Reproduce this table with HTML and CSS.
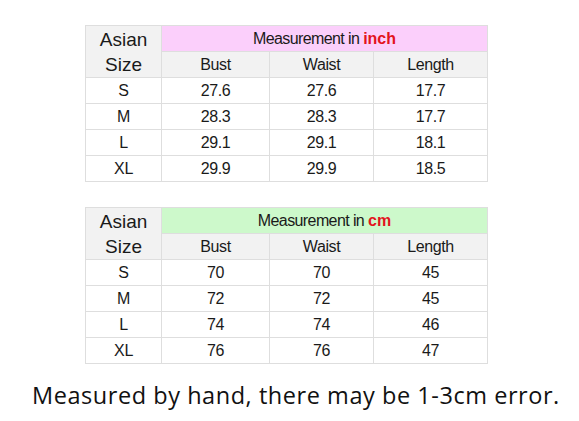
FILE: index.html
```html
<!DOCTYPE html>
<html>
<head>
<meta charset="utf-8">
<link rel="stylesheet" href="styles.css">
</head>
<body>
<div class="page">
  <table class="size-table">
    <colgroup>
      <col class="c-size"><col class="c-bust"><col class="c-waist"><col class="c-length">
    </colgroup>
    <tr class="row">
      <td class="size-head" rowspan="2">Asian<br>Size</td>
      <td class="unit-head pink" colspan="3">Measurement in <b class="unit">inch</b></td>
    </tr>
    <tr class="row">
      <td class="col-head">Bust</td><td class="col-head">Waist</td><td class="col-head">Length</td>
    </tr>
    <tr class="row"><td>S</td><td>27.6</td><td>27.6</td><td>17.7</td></tr>
    <tr class="row"><td>M</td><td>28.3</td><td>28.3</td><td>17.7</td></tr>
    <tr class="row"><td>L</td><td>29.1</td><td>29.1</td><td>18.1</td></tr>
    <tr class="row"><td>XL</td><td>29.9</td><td>29.9</td><td>18.5</td></tr>
  </table>

  <table class="size-table second">
    <colgroup>
      <col class="c-size"><col class="c-bust"><col class="c-waist"><col class="c-length">
    </colgroup>
    <tr class="row">
      <td class="size-head" rowspan="2">Asian<br>Size</td>
      <td class="unit-head green" colspan="3">Measurement in <b class="unit">cm</b></td>
    </tr>
    <tr class="row">
      <td class="col-head">Bust</td><td class="col-head">Waist</td><td class="col-head">Length</td>
    </tr>
    <tr class="row"><td>S</td><td>70</td><td>70</td><td>45</td></tr>
    <tr class="row"><td>M</td><td>72</td><td>72</td><td>45</td></tr>
    <tr class="row"><td>L</td><td>74</td><td>74</td><td>46</td></tr>
    <tr class="row"><td>XL</td><td>76</td><td>76</td><td>47</td></tr>
  </table>

  <p class="note">Measured by hand, there may be 1-3cm error.</p>
</div>
</body>
</html>
```

FILE: styles.css
```css
html, body {
  margin: 0;
  padding: 0;
  background: #ffffff;
}
.page {
  padding-top: 25px;
  display: flex;
  flex-direction: column;
}
.size-table {
  margin-left: 85px;
  width: 402px;
  table-layout: fixed;
  border-collapse: collapse;
  font-family: "Liberation Sans", Arial, sans-serif;
  font-size: 16px;
  color: #1a1a1a;
  letter-spacing: -0.4px;
}
.size-table.second {
  margin-top: 25px;
}
.c-size { width: 76px; }
.c-bust { width: 108px; }
.c-waist { width: 104px; }
.c-length { width: 114px; }
.row { height: 26px; }
.size-table td {
  border: 1px solid #dedede;
  text-align: center;
  padding: 0;
  line-height: 18px;
}
.size-head {
  background: #f2f2f2;
  font-size: 19px;
  line-height: 25px !important;
  letter-spacing: 0;
}
.col-head {
  background: #f2f2f2;
}
.unit-head {
  font-size: 16px;
  letter-spacing: -0.6px;
}
.pink { background: #fbcffb; }
.green { background: #cdf9cb; }
.unit {
  color: #e3141d;
  letter-spacing: 0;
}
.note {
  margin: 16px 0 0 32px;
  font-family: "Open Sans", "Noto Sans", sans-serif;
  font-size: 23.5px;
  letter-spacing: 0.55px;
  color: #111;
  line-height: 30px;
}
```
